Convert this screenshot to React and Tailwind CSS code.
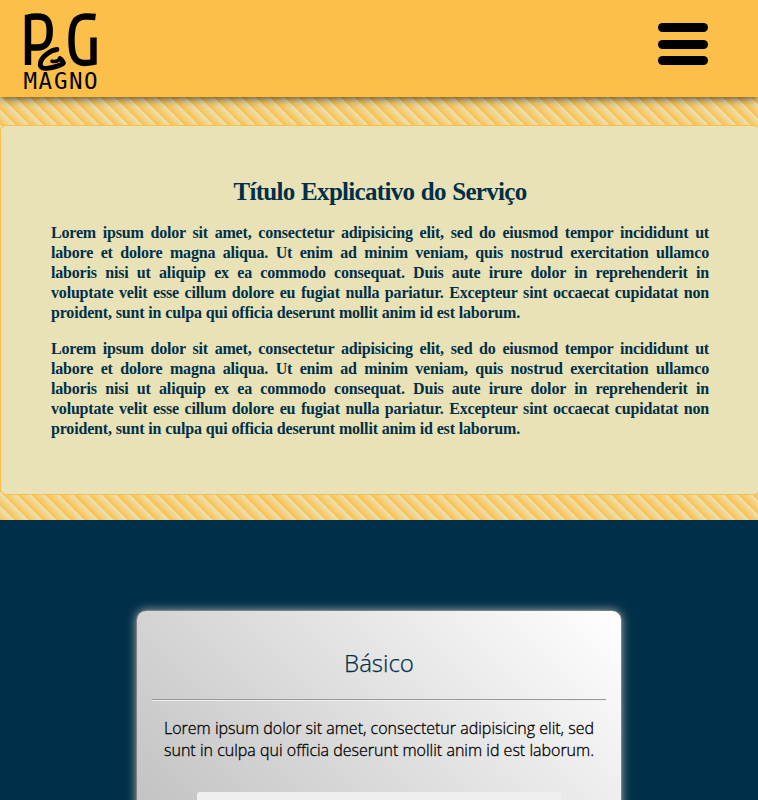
const LINES = [
  'Lorem ipsum dolor sit amet, consectetur adipisicing elit, sed do eiusmod tempor incididunt ut',
  'labore et dolore magna aliqua. Ut enim ad minim veniam, quis nostrud exercitation ullamco',
  'laboris nisi ut aliquip ex ea commodo consequat. Duis aute irure dolor in reprehenderit in',
  'voluptate velit esse cillum dolore eu fugiat nulla pariatur. Excepteur sint occaecat cupidatat non',
];
const LAST = 'proident, sunt in culpa qui officia deserunt mollit anim id est laborum.';

function Logo() {
  return (
    <svg className="ml-5 mt-2 block h-[86px] w-[84px]" viewBox="20 8 84 86" fill="none" stroke="#000">
      <path d="M28 65V17.500Q32 16.500 37 16.500C46 16.500 49.700 20 49.700 31C49.700 43 46 47.500 37 47.500H28" strokeWidth="6.400" />
      <path d="M95.500 17Q90 16.300 85 16.500C75 17 71.500 24 71.500 40C71.500 56 75 62.500 84 63Q89 63 93.500 62V37.500" strokeWidth="6.400" />
      <path d="M57 49.500C51 50 43 56 41 61C39 66 41 69 47 68.300C54 67.500 62 65 63.500 63Q63 60.500 60 58.500" strokeWidth="4.800" strokeLinecap="round" strokeLinejoin="round" />
      <path d="M60 59Q57 62.300 52 61.300" strokeWidth="3.500" strokeLinecap="round" />
      <text x="23.500 38.500 54 69 84" y="89" fontFamily="'DejaVu Sans Mono', monospace" fontSize="22.500" fill="#000" stroke="none">MAGNO</text>
    </svg>
  );
}

function Paragraph() {
  return (
    <p className="mb-4 text-base font-bold leading-5 tracking-[-0.18px]">
      {LINES.map((line) => (
        <span key={line} className="block whitespace-nowrap [text-align-last:justify]">{line}</span>
      ))}
      <span className="block w-[469px] whitespace-nowrap [text-align-last:justify]">{LAST}</span>
    </p>
  );
}

export default function App() {
  return (
    <div className="h-[800px] w-[758px] overflow-hidden bg-[#003049]">
      <header className="relative z-10 flex h-[97px] justify-between bg-[#fcbf49] shadow-[0_0_10px_rgba(0,0,0,0.9)]">
        <Logo />
        <button aria-label="Menu" className="mr-[50px] mt-[23px] flex h-[42px] w-[50px] flex-col justify-between">
          <span className="h-[9px] w-full rounded-full bg-black" />
          <span className="h-[9px] w-full rounded-full bg-black" />
          <span className="h-[9px] w-full rounded-full bg-black" />
        </button>
      </header>

      <section className="h-[423px] bg-[repeating-linear-gradient(45deg,#fcbf49,#eae2b7_10px)] pt-7">
        <div className="h-[370px] w-[760px] rounded-md border border-[#fcbf49] bg-[#eae2b7] pl-[50px] pr-[50px] pt-[50px] font-['Liberation_Serif',serif] text-[#003049]">
          <h2 className="mx-auto mb-[17px] h-[30px] w-[293px] whitespace-nowrap text-[25px] font-bold leading-[32px] tracking-[-0.7px] [text-align-last:justify]">Título Explicativo do Serviço</h2>
          <Paragraph />
          <Paragraph />
        </div>
      </section>

      <section className="pt-[90px] font-['Open_Sans',sans-serif]">
        <article className="mx-auto h-[400px] w-[486px] rounded-[10px] border border-[#808080] bg-[linear-gradient(45deg,#b0b0b0,#fff)] px-[15px] pt-9 shadow-[0_0_10px_#a5a5a5]">
          <h3 className="text-center text-2xl font-light leading-8 text-[#003049] [-webkit-text-stroke:0.25px_#003049]">Básico</h3>
          <hr className="mt-5 border-0 border-t border-[#9a9a9a] shadow-[0_1px_0_#eee]" />
          <p className="mx-3 mt-[17px] text-base font-light leading-[22px] text-black [-webkit-text-stroke:0.3px_#000]">
            <span className="block whitespace-nowrap [text-align-last:justify]">Lorem ipsum dolor sit amet, consectetur adipisicing elit, sed</span>
            <span className="block whitespace-nowrap [text-align-last:justify]">sunt in culpa qui officia deserunt mollit anim id est laborum.</span>
          </p>
          <div className="mx-auto mt-[31px] h-20 w-[364px] rounded-[3px] bg-[#efefef]" />
        </article>
      </section>
    </div>
  );
}
